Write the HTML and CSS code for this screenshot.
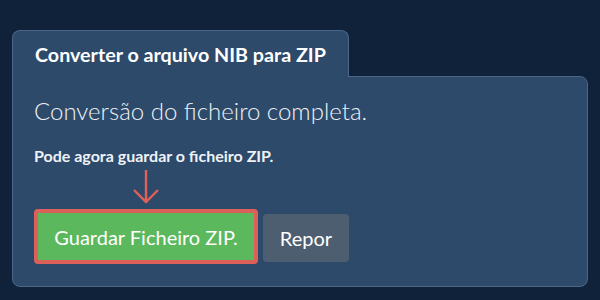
FILE: index.html
```html
<html>
<head>
    <title>Converter NIB para ZIP</title>
    <link rel="stylesheet" href="styles.css">
</head>
<body>
    <div class="card">
        <div class="tab">Converter o arquivo NIB para ZIP</div>
        <div class="panel">
            <h2 class="status">Conversão do ficheiro completa.</h2>
            <p class="hint">Pode agora guardar o ficheiro ZIP.</p>
            <div class="actions">
                <div class="save-wrap">
                    <svg class="arrow" width="30" height="36" viewBox="0 0 30 36">
                        <path d="M15 1 V33 M3 21 L15 33 L27 21" fill="none" stroke="#e0605a" stroke-width="2.4"/>
                    </svg>
                    <button class="btn btn-save">Guardar Ficheiro ZIP.</button>
                </div>
                <button class="btn btn-reset">Repor</button>
            </div>
        </div>
    </div>
</body>
</html>
```

FILE: styles.css
```css
body {
    margin: 0;
    padding: 30px 12px 0 12px;
    background: #10223a;
    font-family: Lato, "Open Sans", sans-serif;
    color: #ffffff;
}
.tab {
    display: inline-block;
    position: relative;
    z-index: 1;
    margin-bottom: -1px;
    padding: 13px 22px 11px 22px;
    background: #2d4a6b;
    border: 1px solid #4b6686;
    border-bottom: none;
    border-radius: 8px 8px 0 0;
    font-size: 19.7px;
    font-weight: bold;
    line-height: 22px;
}
.panel {
    background: #2d4a6b;
    border: 1px solid #4b6686;
    border-radius: 0 8px 8px 8px;
    padding: 19px 21px 22px 21px;
}
.status {
    margin: 0;
    font-size: 24px;
    font-weight: 300;
    line-height: 30px;
    color: #eef2f6;
}
.hint {
    margin: 20px 0 0 0;
    font-size: 16px;
    font-weight: bold;
    line-height: 19px;
    color: #eef2f6;
}
.actions {
    display: flex;
    align-items: flex-end;
    gap: 5px;
}
.save-wrap {
    display: flex;
    flex-direction: column;
    align-items: center;
}
.arrow {
    display: block;
    margin: 4px 0 4px 0;
}
.btn {
    font-family: Lato, "Open Sans", sans-serif;
    font-size: 20px;
    color: #ffffff;
    border-radius: 4px;
    cursor: pointer;
}
.btn-save {
    width: 224px;
    height: 55px;
    background: #5cb85c;
    border: 4px solid #dc605a;
}
.btn-reset {
    width: 86px;
    height: 48px;
    margin-bottom: 2px;
    background: #4d5e70;
    border: none;
}
```
